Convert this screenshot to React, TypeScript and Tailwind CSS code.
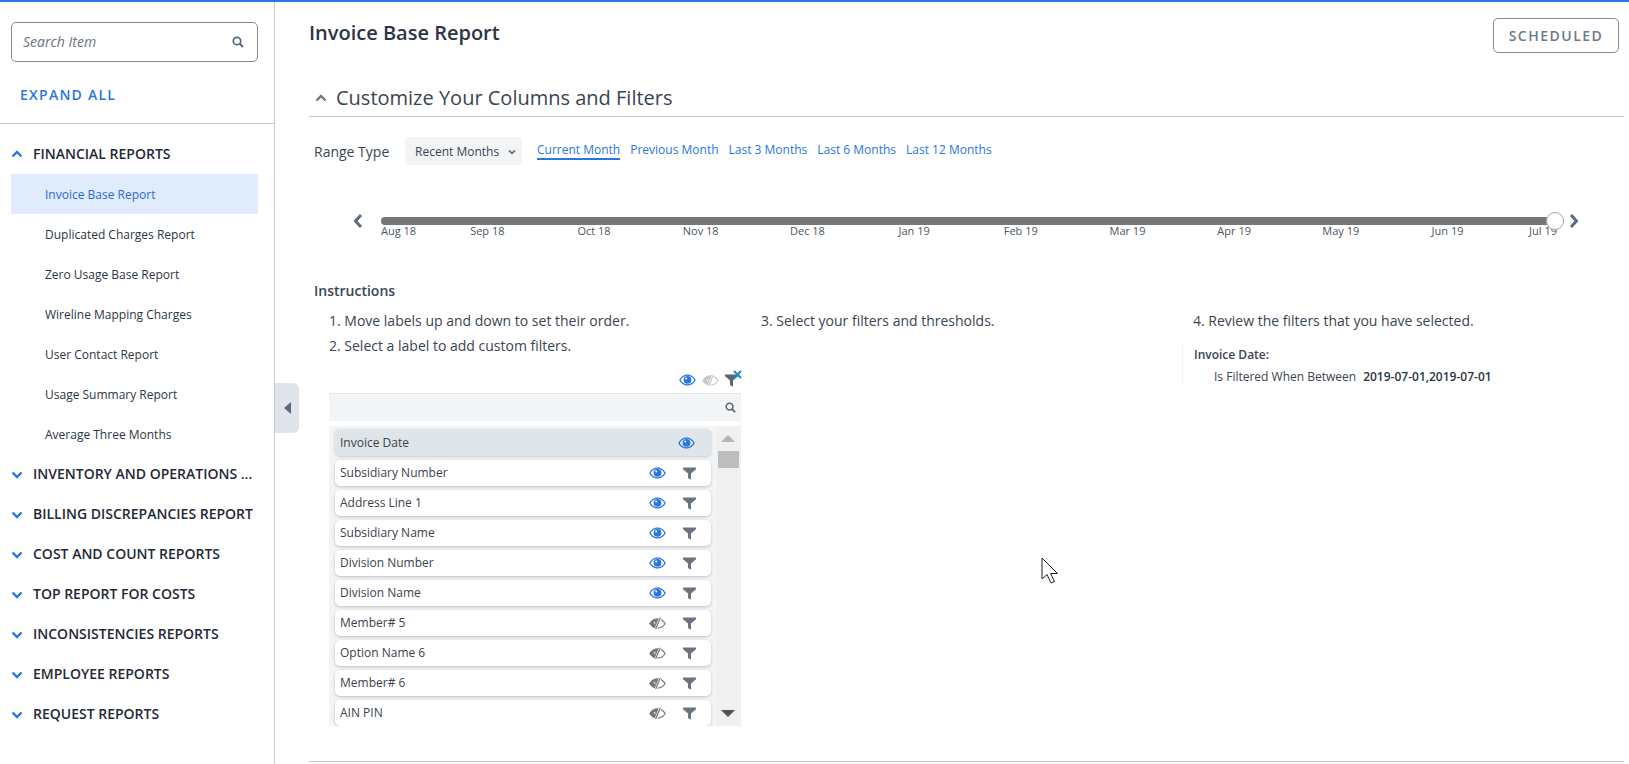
import React from "react";

const F = "font-['Open_Sans',sans-serif]";

function Chevron({ up, className = "" }: { up?: boolean; className?: string }) {
  return (
    <svg width="12" height="8" viewBox="0 0 12 8" className={className}>
      <path d={up ? "M1.5 6.5 L6 2 L10.5 6.5" : "M1.5 1.5 L6 6 L10.5 1.5"} fill="none" stroke="currentColor" strokeWidth="2.4" />
    </svg>
  );
}

function Eye({ className = "text-[#2a76dd]" }: { className?: string }) {
  return (
    <svg width="17" height="12" viewBox="0 0 17 12" className={className}>
      <path fillRule="evenodd" fill="currentColor" d="M8.5 0.5C12.3 0.5 15.4 3 16.8 6 15.4 9 12.3 11.5 8.5 11.5 4.7 11.5 1.6 9 0.2 6 1.6 3 4.7 0.5 8.5 0.5ZM8.5 1.7C5.5 1.7 3 3.5 1.6 6 3 8.5 5.5 10.3 8.5 10.3 11.5 10.3 14 8.5 15.4 6 14 3.5 11.5 1.7 8.5 1.7Z" />
      <circle cx="8.5" cy="5.8" r="3.9" fill="currentColor" />
      <circle cx="7.2" cy="4.4" r="1" fill="#fff" />
    </svg>
  );
}

function EyeOff({ className = "text-[#70777f]" }: { className?: string }) {
  return (
    <svg width="17" height="13" viewBox="0 0 17 13" className={className}>
      <path d="M0.8 6.5C3 3.2 5.7 1.9 8.5 1.9 11.3 1.9 14 3.2 16.2 6.5 14 9.8 11.3 11.1 8.5 11.1 5.7 11.1 3 9.8 0.8 6.5Z" fill="none" stroke="currentColor" strokeWidth="1.2" />
      <path d="M0.8 6.5C3 3.2 5.7 1.9 9.5 1.9L6.3 11C4 10.7 2.5 9 0.8 6.5Z" fill="currentColor" />
      <path d="M4.4 5.4 L6.4 4.4 L6.2 8 Z" fill="#fff" opacity="0.75" />
      <path d="M11.6 0.6 L6.6 12.4" stroke="#fff" strokeWidth="2.6" />
      <path d="M11.4 0.8 L6.6 12" stroke="currentColor" strokeWidth="1.2" />
    </svg>
  );
}

function Funnel({ className = "text-[#6b7280]" }: { className?: string }) {
  return (
    <svg width="13" height="13" viewBox="0 0 13 13" className={className}>
      <path fill="currentColor" d="M0 0.5H13V2.2L8 6.6V12.8L5 11V6.6L0 2.2Z" />
    </svg>
  );
}

function SearchGlyph({ className = "" }: { className?: string }) {
  return (
    <svg width="12" height="12" viewBox="0 0 12 12" className={className}>
      <circle cx="5" cy="5" r="3.7" fill="none" stroke="currentColor" strokeWidth="1.7" />
      <path d="M7.8 7.8 L11 11" stroke="currentColor" strokeWidth="2" />
    </svg>
  );
}

const reports = [
  "Invoice Base Report",
  "Duplicated Charges Report",
  "Zero Usage Base Report",
  "Wireline Mapping Charges",
  "User Contact Report",
  "Usage Summary Report",
  "Average Three Months",
];

const sections = [
  "INVENTORY AND OPERATIONS ...",
  "BILLING DISCREPANCIES REPORT",
  "COST AND COUNT REPORTS",
  "TOP REPORT FOR COSTS",
  "INCONSISTENCIES REPORTS",
  "EMPLOYEE REPORTS",
  "REQUEST REPORTS",
];

const months = ["Sep 18", "Oct 18", "Nov 18", "Dec 18", "Jan 19", "Feb 19", "Mar 19", "Apr 19", "May 19", "Jun 19"];

const rows: [string, boolean][] = [
  ["Subsidiary Number", true],
  ["Address Line 1", true],
  ["Subsidiary Name", true],
  ["Division Number", true],
  ["Division Name", true],
  ["Member# 5", false],
  ["Option Name 6", false],
  ["Member# 6", false],
  ["AIN PIN", false],
];

function Sidebar() {
  return (
    <aside className="w-[275px] shrink-0 border-r border-[#c3c9d3] flex flex-col">
      <div className="pt-5 px-[11px]">
        <div className="h-[40px] w-[247px] border border-[#7f8a99] rounded-[5px] flex items-center justify-between pl-[11px] pr-[13px]">
          <span className="italic text-[14px] text-[#6b7280] pb-[2px]">Search Item</span>
          <SearchGlyph className="text-[#55687f]" />
        </div>
      </div>
      <div className="h-[62px] border-b border-[#c3c9d3] px-5 pt-[22px] text-[14px] leading-[22px] font-semibold tracking-[1.25px] text-[#2a76dd]">
        EXPAND ALL
      </div>
      <div className="pl-[11px] pr-[16px] pt-[10px]">
        <div className="h-[40px] flex items-center">
          <Chevron up className="text-[#2a76dd] w-[12px]" />
          <span className="ml-[10px] text-[14px] font-semibold text-[#1f2937] pb-[2px]">FINANCIAL REPORTS</span>
        </div>
        {reports.map((r, i) => (
          <div
            key={r}
            className={`h-[40px] flex items-center pl-[34px] pt-[2px] text-[12px] ${i === 0 ? "bg-[#e0ebfb] text-[#2a6bcf]" : "text-[#2b3644]"}`}
          >
            {r}
          </div>
        ))}
        {sections.map((s) => (
          <div key={s} className="h-[40px] flex items-center">
            <Chevron className="text-[#2a76dd] w-[12px] mt-[1px]" />
            <span className="ml-[10px] text-[14px] font-semibold text-[#1f2937] whitespace-nowrap pb-[2px]">{s}</span>
          </div>
        ))}
      </div>
    </aside>
  );
}

function FilterPanel() {
  return (
    <div className="w-[412px] mt-[11px]">
      <div className="h-[26px] flex items-center justify-end gap-[6px] pr-[2px]">
        <Eye />
        <EyeOff className="text-[#c2c7cc]" />
        <span className="relative w-[14px] h-[14px] flex items-center">
          <Funnel className="text-[#5f6670]" />
          <svg width="9" height="9" viewBox="0 0 9 9" className="absolute -right-[3px] -top-[3px] text-[#1b88c9]">
            <path d="M1 1 L8 8 M8 1 L1 8" stroke="currentColor" strokeWidth="2" />
          </svg>
        </span>
      </div>
      <div className="h-[28px] bg-[#f2f4f6] border-t border-[#e2e5e9] flex items-center justify-end pr-[5px]">
        <SearchGlyph className="text-[#5c6570] w-[11px] h-[11px]" />
      </div>
      <div className="mt-[5px] h-[300px] overflow-hidden bg-[#f3f4f6] flex">
        <div className="w-[387px] pl-[6px] pt-[3px] flex flex-col gap-[4px]">
          <div className="h-[27px] w-[376px] shrink-0 bg-[#dfe5e9] rounded-[5px] shadow-[0_1px_3px_rgba(0,0,0,0.18)] flex items-center pl-[5px] text-[12px] text-[#3a424d]">
            <span className="flex-1">Invoice Date</span>
            <span className="w-[17px] mr-[16px] flex"><Eye /></span>
          </div>
          {rows.map(([label, on]) => (
            <div key={label} className="h-[26px] w-[376px] shrink-0 bg-white rounded-[5px] shadow-[0_1px_3px_rgba(0,0,0,0.22)] flex items-center pl-[5px] text-[12px] text-[#3a424d]">
              <span className="flex-1">{label}</span>
              <span className="w-[17px] mr-[17px] flex items-center">{on ? <Eye /> : <EyeOff />}</span>
              <span className="w-[13px] mr-[15px] flex items-center"><Funnel /></span>
            </div>
          ))}
        </div>
        <div className="flex-1 bg-[#f0f0f0] relative">
          <div className="absolute left-[5px] top-[9px] w-0 h-0 border-x-[7px] border-x-transparent border-b-[7px] border-b-[#b4b4b4]" />
          <div className="absolute left-[2px] top-[25px] w-[21px] h-[17px] bg-[#bdbdbd]" />
          <div className="absolute left-[5px] bottom-[9px] w-0 h-0 border-x-[7px] border-x-transparent border-t-[7px] border-t-[#505050]" />
        </div>
      </div>
    </div>
  );
}

function Slider() {
  return (
    <div className="mt-[42px] ml-[43px] mr-[44px] flex items-start">
      <svg width="12" height="16" viewBox="0 0 12 16" className="text-[#5b6b80] mt-[4px] shrink-0">
        <path d="M9 2 L3.5 8 L9 14" fill="none" stroke="currentColor" strokeWidth="3" />
      </svg>
      <div className="ml-[17px] flex-1 relative">
        <div className="h-[8px] mt-[8px] rounded-full bg-[#777777]" />
        <div className="flex text-[11px] leading-[14px] text-[#4b5563] mt-[-1px]">
          <span className="w-[53px]">Aug 18</span>
          {months.map((m) => (
            <span key={m} className="w-[106.7px] text-center">{m}</span>
          ))}
          <span className="ml-auto">Jul 19</span>
        </div>
        <div className="absolute right-[-7px] top-[3px] w-[18px] h-[18px] rounded-full bg-white border border-[#a8a8a8]" />
      </div>
      <svg width="12" height="16" viewBox="0 0 12 16" className="text-[#5b6b80] ml-[11px] mt-[4px] shrink-0">
        <path d="M3 2 L8.5 8 L3 14" fill="none" stroke="currentColor" strokeWidth="3" />
      </svg>
    </div>
  );
}

function Main() {
  return (
    <main className="flex-1 min-w-0 pl-[34px] pr-[5px] relative">
      <div className="flex justify-between h-[63px] pt-[16px]">
        <h1 className="text-[20px] leading-[28px] font-semibold text-[#2b3644] pt-[1px]">Invoice Base Report</h1>
        <div className="h-[35px] w-[126px] mr-[5px] border border-[#7f8a99] rounded-[5px] flex items-center justify-center text-[14px] font-semibold tracking-[1.5px] text-[#6c7a8c]">
          SCHEDULED
        </div>
      </div>
      <div className="h-[52px] border-b border-[#c3c9d3] flex items-center pl-[6px] pt-[14px]">
        <Chevron up className="text-[#6b7a8c] w-[12px]" />
        <span className="ml-[9px] text-[20px] text-[#3a4452]">Customize Your Columns and Filters</span>
      </div>
      <div className="ml-[5px] mt-[20px] flex items-start h-[30px]">
        <span className="w-[91px] text-[14px] leading-[30px] text-[#3a4452]">Range Type</span>
        <div className="w-[117px] h-[28px] bg-[#f2f4f6] rounded-[4px] flex items-center pl-[10px] pt-[1px] text-[12px] text-[#3a4452]">
          <span className="flex-1">Recent Months</span>
          <Chevron className="text-[#5b6b80] w-[8px] h-[6px] mr-[6px]" />
        </div>
        <div className="ml-[15px] flex gap-[10px] text-[12px] text-[#2a76dd]">
          <span className="border-b-2 border-[#2a76dd] h-[23px] leading-[26px]">Current Month</span>
          <span className="leading-[26px]">Previous Month</span>
          <span className="leading-[26px]">Last 3 Months</span>
          <span className="leading-[26px]">Last 6 Months</span>
          <span className="leading-[26px]">Last 12 Months</span>
        </div>
      </div>
      <Slider />
      <div className="ml-[5px] mt-[43px] text-[14px] leading-[20px] font-semibold text-[#3a4452]">Instructions</div>
      <div className="flex mt-[10px] ml-[20px] text-[14px] text-[#3a4452]">
        <div className="w-[432px]">
          <div className="leading-[20px]">1. Move labels up and down to set their order.</div>
          <div className="leading-[20px] mt-[5px]">2. Select a label to add custom filters.</div>
          <FilterPanel />
        </div>
        <div className="w-[432px] leading-[20px]">3. Select your filters and thresholds.</div>
        <div className="leading-[20px]">
          <div>4. Review the filters that you have selected.</div>
          <div className="mt-[14px] -ml-[11px] pl-[11px] border-l border-dotted border-[#e8e8e8] h-[40px] text-[12px]">
            <div className="font-semibold leading-[20px] text-[#3a4452]">Invoice Date:</div>
            <div className="flex pl-[20px] leading-[22px] mt-[1px]">
              <span>Is Filtered When Between</span>
              <span className="ml-[7px] font-semibold text-[#2b3644]">2019-07-01,2019-07-01</span>
            </div>
          </div>
        </div>
      </div>
      <div className="absolute left-[34px] right-[5px] top-[759px] border-b border-[#c3c9d3]" />
      <div className="absolute left-0 top-[381px] w-[24px] h-[50px] bg-[#dfe5ea] rounded-r-[6px] flex items-center justify-center">
        <div className="w-0 h-0 border-y-[6px] border-y-transparent border-r-[7px] border-r-[#5b6b7d]" />
      </div>
      <svg width="19" height="28" viewBox="0 0 19 28" className="absolute left-[766px] top-[555px]">
        <path d="M1 1 V22 L6 17.5 L10 26 L13.5 24.5 L9.5 16.5 H16.5 Z" fill="#fff" stroke="#222" strokeWidth="1" />
      </svg>
    </main>
  );
}

export default function App() {
  return (
    <div className={`${F} w-[1629px] h-[764px] overflow-hidden bg-white flex flex-col`}>
      <div className="h-[2px] bg-[#2a76dd] shrink-0" />
      <div className="flex flex-1 min-h-0">
        <Sidebar />
        <Main />
      </div>
    </div>
  );
}
